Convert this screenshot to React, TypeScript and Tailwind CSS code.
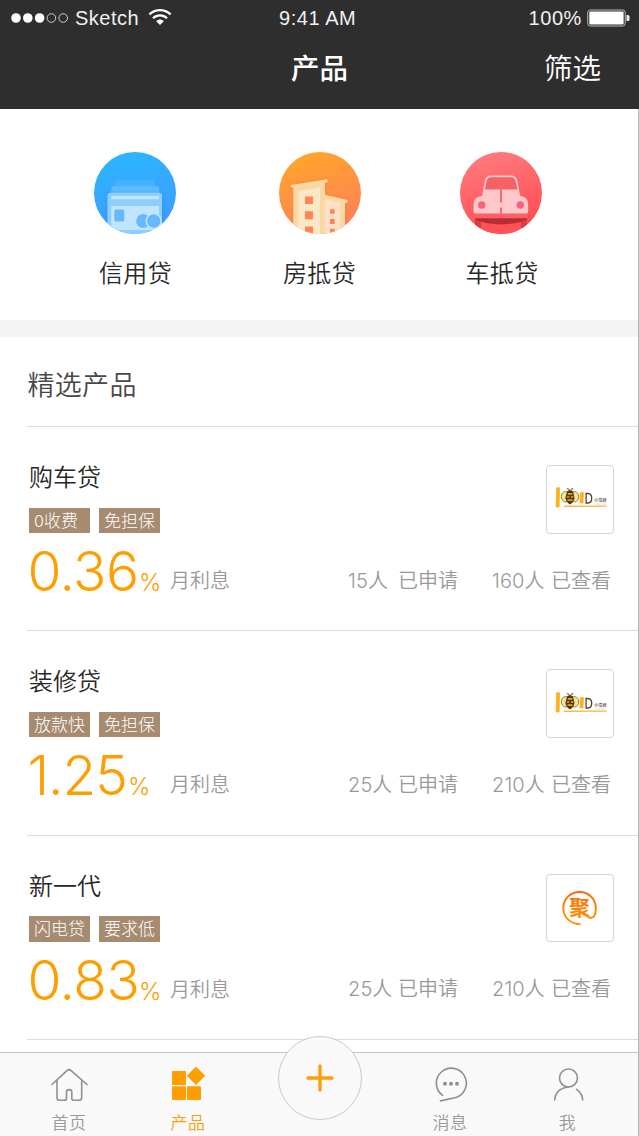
import React from "react";

type Product = {
  name: string;
  tags: string[];
  rate: string;
  rateClass: string;
  applied: [string, string];
  viewed: [string, string];
  logo: "bee" | "ju";
};

const products: Product[] = [
  { name: "购车贷", tags: ["0收费", "免担保"], rate: "0.36", rateClass: "w-[111.5px] tracking-[-0.5px]", applied: ["15", "已申请"], viewed: ["160", "已查看"], logo: "bee" },
  { name: "装修贷", tags: ["放款快", "免担保"], rate: "1.25", rateClass: "w-[100.5px] tracking-[-1.1px]", applied: ["25", "已申请"], viewed: ["210", "已查看"], logo: "bee" },
  { name: "新一代", tags: ["闪电贷", "要求低"], rate: "0.83", rateClass: "w-[111.5px] tracking-[-0.5px]", applied: ["25", "已申请"], viewed: ["210", "已查看"], logo: "ju" },
];

function StatusBar() {
  return (
    <div className="flex h-9 items-center text-[20px] text-[#f0f0f0] font-['Liberation_Sans',sans-serif]">
      <div className="flex w-[213px] shrink-0 items-center pl-[11px]">
        <svg width="58" height="12" viewBox="0 0 58 12" className="shrink-0">
          <circle cx="5" cy="6" r="4.8" fill="#fff" />
          <circle cx="16.8" cy="6" r="4.8" fill="#fff" />
          <circle cx="28.6" cy="6" r="4.8" fill="#fff" />
          <circle cx="40.4" cy="6" r="4.3" fill="none" stroke="#ddd" strokeWidth="0.9" />
          <circle cx="52.2" cy="6" r="4.3" fill="none" stroke="#ddd" strokeWidth="0.9" />
        </svg>
        <span className="ml-[6px] w-[73px] tracking-[0.5px] leading-9">Sketch</span>
        <svg width="24" height="18" viewBox="0 0 24 18" className="shrink-0">
          <g fill="none" stroke="#fff" strokeWidth="2.3">
            <path d="M1.4 5.4 C7.4 -0.3 16.6 -0.3 22.6 5.4" />
            <path d="M5 9.3 C8.9 5.5 15.1 5.5 19 9.3" />
          </g>
          <path d="M8.2 12.2 C10.5 10 13.5 10 15.8 12.2 L12 16Z" fill="#fff" />
        </svg>
      </div>
      <div className="w-[213px] pl-[66px] tracking-[0.55px] leading-9">9:41 AM</div>
      <div className="flex w-[213px] items-center justify-end pr-[9px]">
        <span className="mr-[5px] tracking-[0.6px] leading-9">100%</span>
        <svg width="43" height="18" viewBox="0 0 43 18">
          <rect x="0.7" y="1" width="37.5" height="16" rx="2.5" fill="none" stroke="#bbb" strokeWidth="1" />
          <rect x="2.3" y="2.5" width="34.3" height="13" rx="1" fill="#fff" />
          <path d="M39.5 6h1.5q1.5 0 1.5 1.5v3q0 1.5-1.5 1.5h-1.5z" fill="#eee" />
        </svg>
      </div>
    </div>
  );
}

function CreditIcon() {
  return (
    <svg width="82" height="82" viewBox="0 0 82 82">
      <defs>
        <linearGradient id="blue" x1="0" y1="0" x2="0.25" y2="1">
          <stop stopColor="#29b8ff" />
          <stop offset="1" stopColor="#3f9cff" />
        </linearGradient>
        <clipPath id="disc"><circle cx="41" cy="41" r="41" /></clipPath>
        <filter id="shade" x="-20%" y="-20%" width="140%" height="140%">
          <feDropShadow dx="0" dy="0" stdDeviation="2" floodColor="#1777d8" floodOpacity="0.35" />
        </filter>
      </defs>
      <g clipPath="url(#disc)">
        <rect width="82" height="82" fill="url(#blue)" />
        <rect x="21" y="28" width="40" height="20" rx="2.5" fill="#45b2ff" />
        <rect x="17.3" y="34.2" width="48" height="20" rx="2.5" fill="#60bcff" />
        <rect x="13.5" y="40.7" width="54.5" height="48" rx="3" fill="#8ccfff" filter="url(#shade)" />
        <rect x="17.3" y="44" width="47.7" height="3.3" fill="#c1e5ff" />
        <rect x="17.3" y="54" width="47.7" height="24" fill="#c1e5ff" />
        <rect x="20.3" y="57.5" width="10" height="12" rx="1.5" fill="#67b9ff" />
        <circle cx="49.2" cy="69" r="7" fill="#67b9ff" />
        <circle cx="59.7" cy="69" r="7.5" fill="#67b9ff" stroke="#c1e5ff" strokeWidth="1.6" />
      </g>
    </svg>
  );
}

function HouseIcon() {
  return (
    <svg width="82" height="82" viewBox="0 0 82 82">
      <defs>
        <linearGradient id="orange" x1="0.25" y1="0" x2="0.6" y2="1">
          <stop stopColor="#ffa62a" />
          <stop offset="1" stopColor="#ff8058" />
        </linearGradient>
        <filter id="warmShade" x="-20%" y="-20%" width="140%" height="140%">
          <feDropShadow dx="0" dy="0" stdDeviation="2" floodColor="#d95f1c" floodOpacity="0.3" />
        </filter>
      </defs>
      <g clipPath="url(#disc)">
        <rect width="82" height="82" fill="url(#orange)" />
        <g filter="url(#warmShade)">
          <path d="M45 42.5 L68.5 48 V50.5 L66 50.8 V82 H45Z" fill="#f8d9a4" />
          <path d="M12 33 L48.5 27.2 V30.3 L46 31 V82 H14.3 V35.7 L12 35.5Z" fill="#f8d9a4" />
        </g>
        <path d="M19.3 39.3 L41 35.2 V82 H19.3Z" fill="#fae7c7" />
        <path d="M46 47.2 L61 50.8 V82 H46Z" fill="#fce0ca" />
        <path d="M26 44.5h8v7.5h-8zM26 59.3h8v8h-8zM26 74.5h8v7.5h-8zM51 57.3h4.7v4.5h-4.7zM51 67h4.7v5h-4.7zM51 76.7h4.7v5h-4.7z" fill="#ff8450" />
      </g>
    </svg>
  );
}

function CarIcon() {
  return (
    <svg width="82" height="82" viewBox="0 0 82 82">
      <defs>
        <linearGradient id="red" x1="0.3" y1="0" x2="0.6" y2="1">
          <stop stopColor="#ff7b7e" />
          <stop offset="1" stopColor="#ff4b4f" />
        </linearGradient>
      </defs>
      <g clipPath="url(#disc)">
        <rect width="82" height="82" fill="url(#red)" />
        <path d="M15 66 H67 V82 H61 V72 H21 V82 H15Z" fill="#d73d43" />
        <path d="M21 69 H61 V82 H21Z" fill="#ff5257" />
        <path d="M15 66 H67 V67.5 C52 74 30 74 15 67.5Z" fill="#b82d33" />
        <path d="M13.5 61.5h54.7v4.7H13.5z" fill="#ff6065" />
        <path d="M22 44 L24.8 29 Q25.8 23.5 31 23.5 H51 Q56.4 23.5 57.4 29 L60.2 44 Q68.2 44.5 68.2 53 V59.5 Q68.2 61.5 66.5 61.5 H15.2 Q13.5 61.5 13.5 59.5 V53 Q13.5 44.5 22 44Z" fill="#ffc8cb" />
        <path d="M25 37.5 L26.5 29 Q27.5 25.2 31 25.2 H51 Q54.7 25.2 55.5 29 L57.5 37.5Z" fill="#f46265" />
        <path d="M40 37.5h2v13h-2zM40 55.5h2v6h-2z" fill="#fa666a" />
        <circle cx="21.7" cy="53" r="3.7" fill="#fb6083" />
        <circle cx="60.3" cy="53" r="3.7" fill="#fb6083" />
      </g>
    </svg>
  );
}

function BeeLogo() {
  return (
    <svg width="66" height="66" viewBox="0.7 0 66 66" className="shrink-0">
      <path d="M10.3 21.8h3l-.5 19.2H9.8z" fill="#fbb11a" stroke="#fbb11a" strokeWidth="0.8" strokeLinejoin="round" />
      <g fill="none" stroke="#5a3b20" strokeWidth="0.9">
        <path d="M20.5 22.8h1.7l1 2M27 22.8h-1.7l-1 2" />
        <ellipse cx="19.2" cy="30.8" rx="4.2" ry="5.2" fill="#f6e78f" stroke="#8c7432" />
        <ellipse cx="28.2" cy="30.8" rx="4.2" ry="5.2" fill="#f6e78f" stroke="#8c7432" />
      </g>
      <path d="M20.7 25.5q3-2.4 6 0l1.5 6.5q-.6 4.3-4.5 6.5q-3.9-2.2-4.6-6.5z" fill="#50351c" />
      <path d="M21.5 27.8h4.5M20.5 31h2.5M24.6 31h2.5M21.2 34.2h5" stroke="#e8a51c" strokeWidth="1.7" />
      <path d="M34 26.5h3.3l-.5 10.5h-3.2z" fill="#fbb11a" stroke="#fbb11a" strokeWidth="0.6" strokeLinejoin="round" />
      <path d="M39.8 27.5v9.5h1.8q3.8-.3 3.8-4.8t-3.8-4.7z" fill="none" stroke="#5a4030" strokeWidth="1.3" />
      <path d="M17.5 39.4h43v1.3l-43 .4z" fill="#fab849" />
      <text x="48" y="36" fontSize="4.1" fontWeight="700" fill="#78716c" fontFamily="Noto Sans CJK SC, sans-serif">小蜜蜂</text>
      <path d="M48.5 38h11" stroke="#c4c0bc" strokeWidth="0.7" strokeDasharray="1.5 0.6" />
    </svg>
  );
}

function JuLogo() {
  return (
    <svg width="66" height="66" viewBox="0.7 0 66 66" className="shrink-0">
      <defs>
        <linearGradient id="ju" x1="0" y1="16" x2="0" y2="51" gradientUnits="userSpaceOnUse">
          <stop stopColor="#ff6504" />
          <stop offset="1" stopColor="#ff9d00" />
        </linearGradient>
      </defs>
      <path d="M33.5 49.2 C23 48.7 17 41.5 17 33 C17 24 24 17 33.2 17 C42.5 17 49.5 24 49.5 33 C49.5 38 48 43 44.5 43 C42 42.5 40 40.5 37 37" fill="none" stroke="url(#ju)" strokeWidth="2" strokeLinecap="round" />
      <text x="22.8" y="40.3" fontSize="21" fontWeight="700" fill="url(#ju)" fontFamily="Noto Sans CJK SC, sans-serif">聚</text>
    </svg>
  );
}

function Count({ n, label }: { n: string; label: string }) {
  return (
    <>
      <span><span className="font-['Inter',sans-serif] tracking-[0.1px]">{n}</span>人</span>
      <span>{label}</span>
    </>
  );
}

function ProductRow({ p }: { p: Product }) {
  return (
    <article className="ml-[27px] flex h-[204.4px] shrink-0 flex-col border-t border-[#dcdcdc] pl-[2px]">
      <div className="mt-[38px] flex h-[68px] justify-between pr-[25px]">
        <div className="flex flex-col">
          <h3 className="mt-[-7px] h-[36px] text-[24px] leading-[36px] text-[#282828] font-[350]">{p.name}</h3>
          <div className="mt-[13.5px] flex gap-[9px]">
            {p.tags.map((t) => (
              <span key={t} className="h-[25.5px] w-[61px] bg-[#a68b70] pl-[5px] text-[17px] font-light leading-[23.5px] text-white whitespace-nowrap">
                {t.startsWith("0") ? <><span className="font-['Inter',sans-serif] text-[16px]">0</span>{t.slice(1)}</> : t}
              </span>
            ))}
          </div>
        </div>
        <div className="flex size-[68.5px] shrink-0 items-center justify-center rounded-[4px] border border-[#d4d4d4] bg-white">
          {p.logo === "bee" ? <BeeLogo /> : <JuLogo />}
        </div>
      </div>
      <div className="flex h-[94px] items-center text-[20px] font-[350] text-[#999] whitespace-nowrap">
        <div className="mt-[-18px] flex w-[141px] items-baseline text-[#ff9e00] font-['Inter',sans-serif]">
          <span className={`${p.rateClass} ml-[-1.5px] shrink-0 text-[55px] leading-[60px] font-[360]`}>{p.rate}</span>
          <span className="text-[24px] leading-[30px] font-[360]">%</span>
        </div>
        <span className="w-[178px]">月利息</span>
        <span className="flex w-[144px] justify-between pr-[34px]">
          <Count n={p.applied[0]} label={p.applied[1]} />
        </span>
        <span className="flex w-[119px] justify-between">
          <Count n={p.viewed[0]} label={p.viewed[1]} />
        </span>
      </div>
    </article>
  );
}

function TabLabel({ children, active }: { children: React.ReactNode; active?: boolean }) {
  return (
    <span className={`text-[17px] leading-[24px] tracking-[0.4px] font-[350] ${active ? "text-[#ff9e00]" : "text-[#999]"}`}>{children}</span>
  );
}

export default function App() {
  return (
    <div className="relative flex h-[1136px] w-[639px] flex-col overflow-hidden bg-white font-['Noto_Sans_CJK_SC',sans-serif]">
      <header className="h-[109px] shrink-0 bg-[#2e2e2e]">
        <StatusBar />
        <div className="grid h-[63px] grid-cols-3 items-center text-[28.5px] text-white">
          <span />
          <h1 className="text-center font-medium">产品</h1>
          <span className="pr-[38px] text-right font-[350]">筛选</span>
        </div>
      </header>

      <section className="flex h-[211px] shrink-0 pt-[42.5px] pl-[43px] text-[24px] text-[#282828] font-[350]">
        <div className="flex w-[183px] flex-col items-center gap-[20px]"><CreditIcon /><span className="pl-[2px] tracking-[0.4px] leading-[35px]">信用贷</span></div>
        <div className="flex w-[187px] flex-col items-center gap-[20px]"><HouseIcon /><span className="tracking-[0.4px] leading-[35px]">房抵贷</span></div>
        <div className="flex w-[176px] flex-col items-center gap-[20px]"><CarIcon /><span className="pl-[2px] tracking-[0.4px] leading-[35px]">车抵贷</span></div>
      </section>

      <div className="h-[17px] shrink-0 bg-[#f4f4f4]" />

      <main className="flex h-[715px] shrink-0 flex-col overflow-hidden">
        <h2 className="h-[89px] shrink-0 pl-[27.5px] text-[27px] leading-[93px] tracking-[0.3px] text-[#484848] font-[350]">精选产品</h2>
        {products.map((p) => <ProductRow key={p.name} p={p} />)}
        <div className="ml-[27px] shrink-0 border-t border-[#dcdcdc]" />
      </main>

      <nav className="relative flex h-[84px] shrink-0 border-t-[1.5px] border-[#c4c4c4] bg-[#f9f9f9]">
        <div className="flex w-[138px] flex-col items-center pt-[13px]">
          <svg width="40" height="36" viewBox="0 0 40 36" fill="none" stroke="#909090" strokeWidth="1.6" strokeLinecap="round" strokeLinejoin="round">
            <path d="M3 18.5 L18.2 4.4 Q20 2.8 21.8 4.4 L38 18.5" />
            <path d="M8 14.5 V31.5 Q8 34.3 10.5 34.3 H15.5 Q17.5 34.3 17.5 32.2 V26 Q17.5 23.6 20 23.6 Q22.8 23.6 22.8 26 V32.2 Q22.8 34.3 25 34.3 H30 Q32.7 34.3 32.7 31.5 V14.5" />
          </svg>
          <span className="mt-[8px] flex"><TabLabel>首页</TabLabel></span>
        </div>
        <div className="flex w-[100px] flex-col items-center pt-[13px]">
          <svg width="34" height="36" viewBox="0 0 34 36" fill="#ff9e00">
            <rect x="1" y="5" width="14" height="14" rx="1" />
            <rect x="1" y="20.3" width="14" height="13.7" rx="1" />
            <rect x="16" y="20.3" width="14" height="13.7" rx="1" />
            <rect x="18.5" y="3.3" width="13" height="13" rx="1" transform="rotate(45 25 9.8)" />
          </svg>
          <span className="mt-[8px] flex"><TabLabel active>产品</TabLabel></span>
        </div>
        <button className="absolute left-[278px] top-[-17px] flex size-[84px] items-center justify-center rounded-full border-[1.5px] border-[#cacaca] bg-[#f9f9f9]" aria-label="+">
          <svg width="30" height="30" viewBox="0 0 30 30" stroke="#ff9e00" strokeWidth="3.3" strokeLinecap="round"><path d="M3 15h24M15 3v24" /></svg>
        </button>
        <div className="ml-[163px] flex w-[98px] flex-col items-center pt-[13px]">
          <svg width="36" height="36" viewBox="0 0 36 36" fill="none" stroke="#909090" strokeWidth="1.6" strokeLinecap="round">
            <path d="M10.5 29.3 A15 15 0 1 1 23.8 31.5 L8.5 34.9" />
            <g fill="#909090" stroke="none"><circle cx="13" cy="17.8" r="2" /><circle cx="19" cy="17.8" r="2" /><circle cx="25" cy="17.8" r="2" /></g>
          </svg>
          <span className="mt-[8px] flex"><TabLabel>消息</TabLabel></span>
        </div>
        <div className="flex w-[137px] flex-col items-center pt-[13px]">
          <svg width="32" height="36" viewBox="0 0 32 36" fill="none" stroke="#909090" strokeWidth="1.6" strokeLinecap="round">
            <circle cx="16.5" cy="12" r="9" />
            <path d="M2.7 34 Q3.5 22.5 16.5 21 M24.5 23.3 Q30.3 27 30.7 34" />
          </svg>
          <span className="mt-[8px] flex"><TabLabel>我</TabLabel></span>
        </div>
      </nav>
      <div className="absolute right-0 top-[109px] h-[1027px] w-px bg-[#b5b5b5]" />
    </div>
  );
}
